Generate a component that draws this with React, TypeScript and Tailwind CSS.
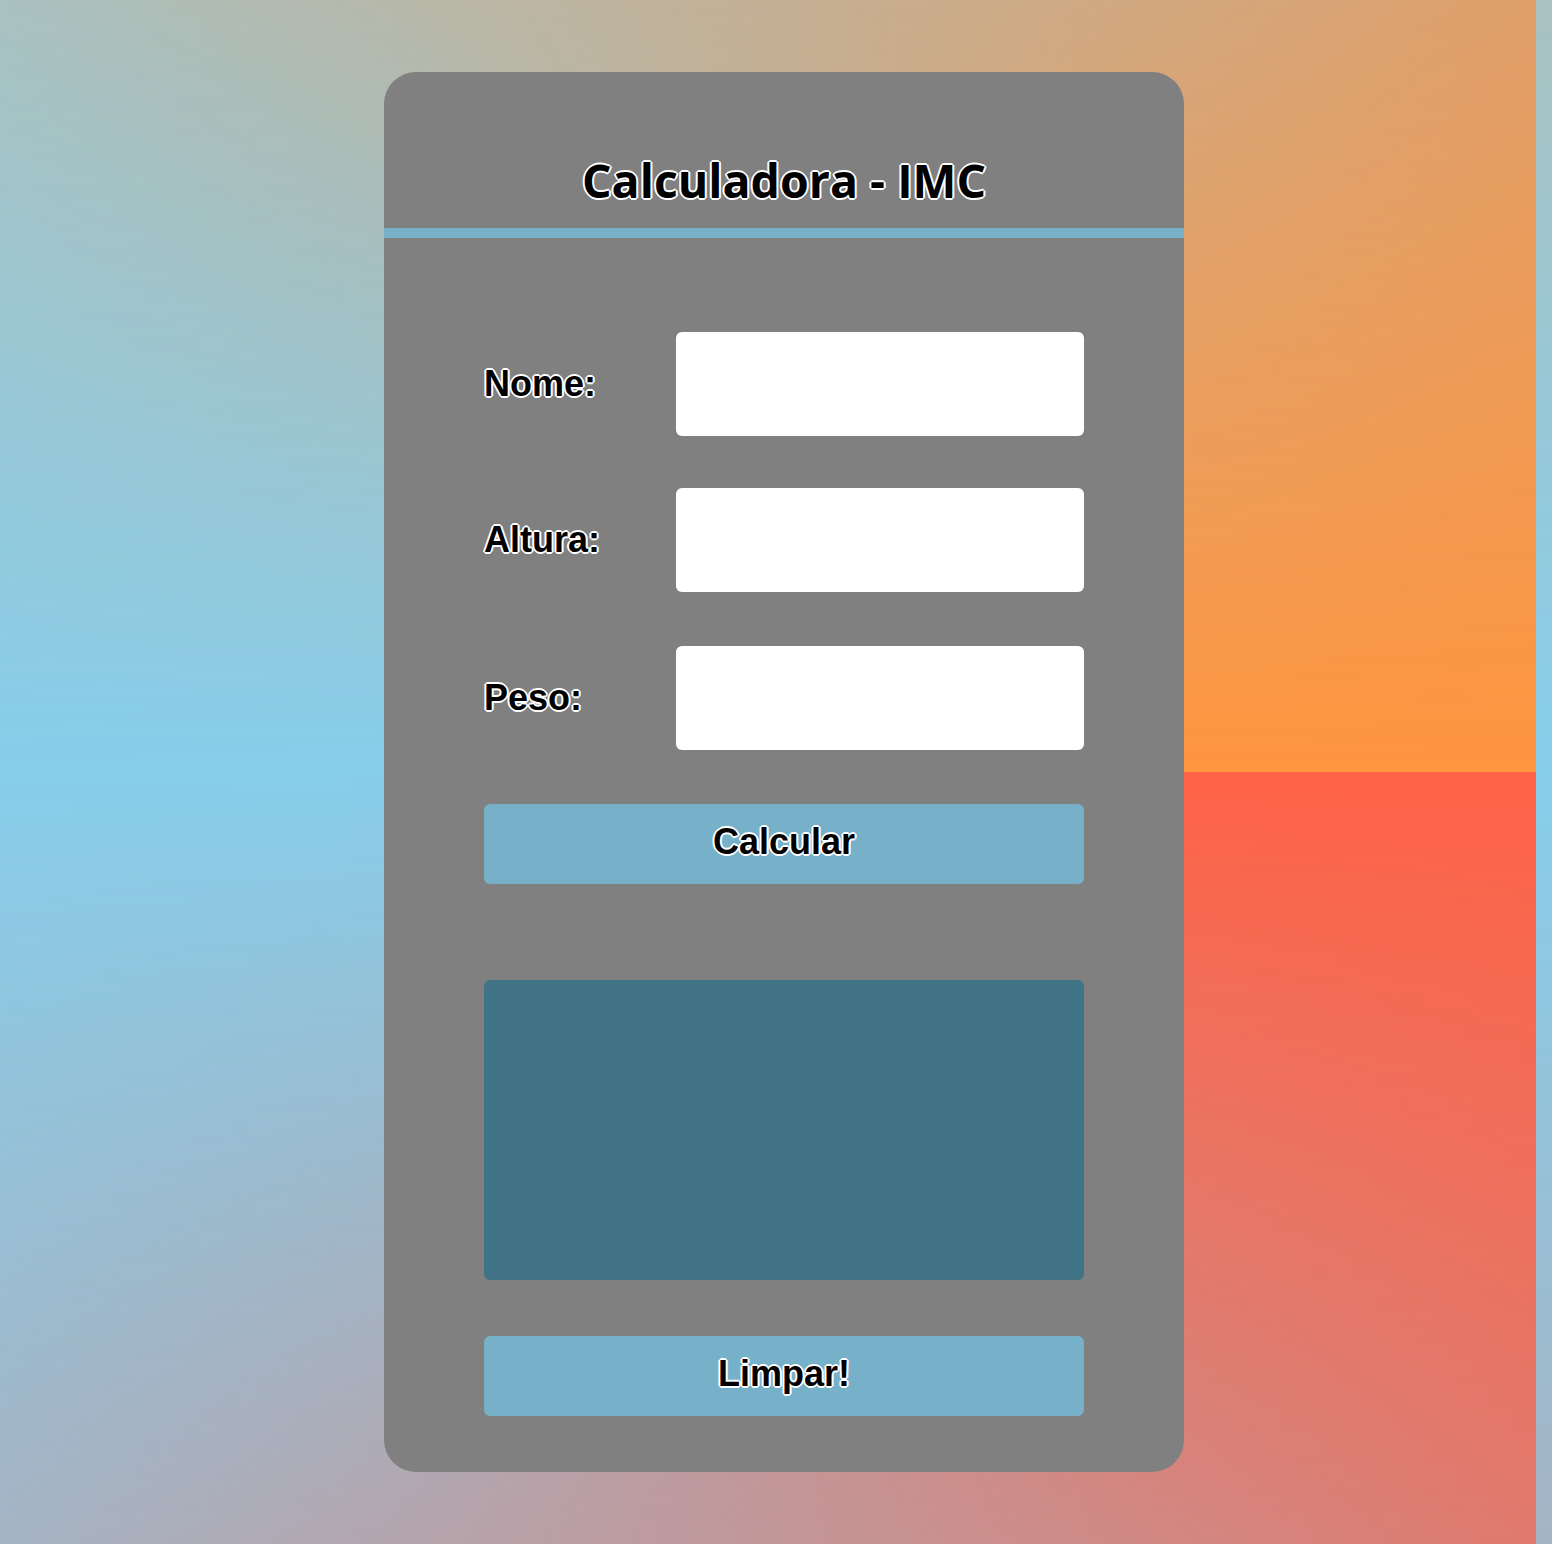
import React from "react";

const outline =
  "[text-shadow:-1px_-1px_0_#fff,1px_-1px_0_#fff,-1px_1px_0_#fff,1px_1px_0_#fff,0_2px_0_#fff,2px_0_0_#fff,-2px_0_0_#fff,0_-2px_0_#fff]";

function Row({ label, mt }: { label: string; mt: string }) {
  return (
    <div className={`flex items-center ${mt}`}>
      <label
        className={`w-[192px] text-[36px] font-bold text-black leading-none ${outline}`}
        style={{ fontFamily: '"Liberation Sans", Arial, sans-serif' }}
      >
        {label}
      </label>
      <input
        type="text"
        className="w-[408px] h-[104px] rounded-[6px] bg-white border-0 outline-none"
      />
    </div>
  );
}

export default function App() {
  return (
    <div className="flex w-full min-h-[1544px]">
      <div className="relative w-[1536px] h-[1544px] shrink-0 [background:linear-gradient(to_right,#87ceeb_25%,#ff9640_75%)_top/100%_50%_no-repeat,linear-gradient(to_right,#87ceeb_25%,#ff6347_75%)_bottom/100%_50%_no-repeat] before:content-[''] before:absolute before:left-0 before:top-0 before:w-full before:h-1/2 before:bg-[linear-gradient(to_right,rgb(203,180,149),rgb(230,163,106)_25%,rgb(164,185,190)_75%,rgb(191,168,146))] before:[mask-image:linear-gradient(to_bottom,rgba(0,0,0,0.5),rgba(0,0,0,0))] after:content-[''] after:absolute after:left-0 after:bottom-0 after:w-full after:h-1/2 after:bg-[linear-gradient(to_right,rgb(195,154,157),rgb(224,125,114)_25%,rgb(163,174,192)_75%,rgb(193,145,149))] after:[mask-image:linear-gradient(to_top,rgba(0,0,0,0.5),rgba(0,0,0,0))] pt-[72px]">
        <div className="relative z-10 ml-[384px] w-[800px] h-[1400px] rounded-[32px] bg-[#808080] flex flex-col">
          <div className="h-[156px] flex flex-col items-center justify-end pb-[25px]">
            <h1
              className={`text-[46.5px] font-bold text-black leading-none ${outline}`}
              style={{ fontFamily: '"Open Sans", "Noto Sans", sans-serif' }}
            >
              Calculadora - IMC
            </h1>
          </div>
          <div className="h-[10px] bg-[#77b1c9]" />
          <div className="px-[100px] pt-[94px] flex flex-col">
            <Row label="Nome:" mt="mt-0" />
            <Row label="Altura:" mt="mt-[52px]" />
            <Row label="Peso:" mt="mt-[54px]" />
            <button
              className={`mt-[54px] w-[600px] h-[80px] pb-[4px] rounded-[6px] bg-[#77b1c9] text-[36px] font-bold text-black leading-none ${outline}`}
              style={{ fontFamily: '"Liberation Sans", Arial, sans-serif' }}
            >
              Calcular
            </button>
            <div className="mt-[96px] w-[600px] h-[300px] rounded-[6px] bg-[#407386]" />
            <button
              className={`mt-[56px] w-[600px] h-[80px] pb-[4px] rounded-[6px] bg-[#77b1c9] text-[36px] font-bold text-black leading-none ${outline}`}
              style={{ fontFamily: '"Liberation Sans", Arial, sans-serif' }}
            >
              Limpar!
            </button>
          </div>
        </div>
      </div>
      <div className="flex-1 h-[1544px] bg-[linear-gradient(to_bottom,rgb(169,193,192),#87ceeb_50%,rgb(165,180,196))]" />
    </div>
  );
}
